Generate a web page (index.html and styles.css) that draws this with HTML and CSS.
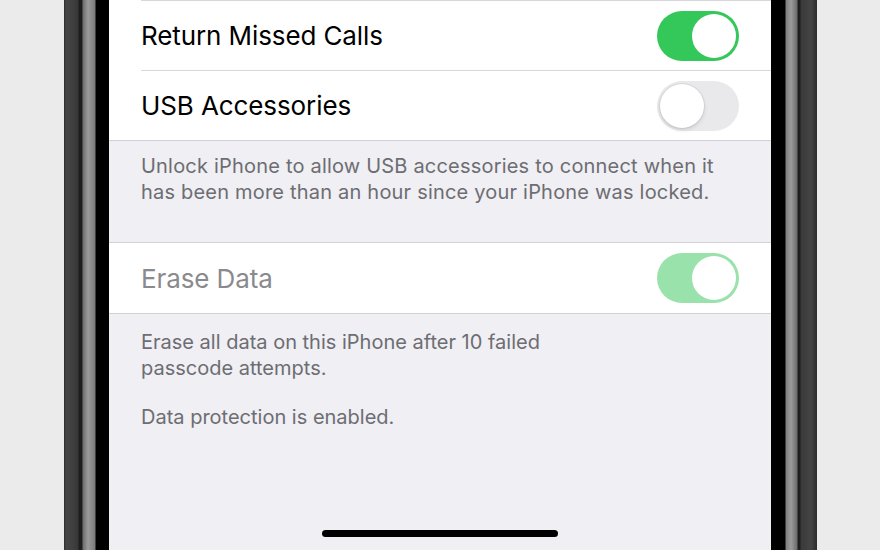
FILE: index.html
```html
<!DOCTYPE html>
<html>
<head>
<meta charset="utf-8">
<link rel="stylesheet" href="styles.css">
</head>
<body>
<div class="phone">
  <div class="bezel bezel-left"></div>
  <div class="screen">
    <div class="group">
      <div class="row">
        <span class="label">Return Missed Calls</span>
        <span class="toggle on"><span class="knob"></span></span>
      </div>
      <div class="row">
        <span class="label">USB Accessories</span>
        <span class="toggle off"><span class="knob"></span></span>
      </div>
    </div>
    <div class="footer footer-usb">
      <p>Unlock iPhone to allow USB accessories to connect when it<br>has been more than an hour since your iPhone was locked.</p>
    </div>
    <div class="group">
      <div class="row">
        <span class="label disabled">Erase Data</span>
        <span class="toggle on dim"><span class="knob"></span></span>
      </div>
    </div>
    <div class="footer footer-erase">
      <p>Erase all data on this iPhone after 10 failed<br>passcode attempts.</p>
      <p>Data protection is enabled.</p>
    </div>
    <div class="home-indicator"></div>
  </div>
  <div class="bezel bezel-right"></div>
</div>
</body>
</html>
```

FILE: styles.css
```css
* { box-sizing: border-box; }
html, body { margin: 0; padding: 0; }
body {
  background: #ebebeb;
  width: 880px;
  height: 550px;
  overflow: hidden;
  font-family: Inter, "Noto Sans", sans-serif;
}
.phone {
  display: flex;
  height: 550px;
  margin-left: 64px;
  width: 753px;
}
.bezel { height: 100%; }
.bezel-left {
  width: 45px;
  background: linear-gradient(to right,
    #2c2c2c 0px, #454545 2px, #3e3e3e 10px, #363636 14px,
    #1e1e1e 15px, #1e1e1e 18px,
    #6e6e6e 19px, #9a9a9a 24px, #7a7a7a 31px,
    #000 32px, #000 45px);
}
.bezel-right {
  width: 46px;
  background: linear-gradient(to right,
    #000 0px, #000 14px,
    #7e7e7e 15px, #9c9c9c 20px, #6c6c6c 26px,
    #1e1e1e 27px, #1e1e1e 29px,
    #3a3a3a 30px, #444 40px, #2c2c2c 46px);
}
.screen {
  width: 662px;
  background: #efeff4;
  display: flex;
  flex-direction: column;
  position: relative;
}
.group {
  background: #fff;
  border-bottom: 1px solid #d1d1d6;
}
.row {
  height: 70px;
  margin-left: 32px;
  padding-right: 32px;
  display: flex;
  align-items: center;
  justify-content: space-between;
  border-top: 1px solid #d8d8dc;
}
.group + .footer + .group { border-top: 1px solid #d1d1d6; }
.group + .footer + .group .row { border-top: none; }
.label {
  font-size: 26px;
  color: #000;
  letter-spacing: -0.1px;
}
.label.disabled { color: #8a8a8e; }
.toggle {
  width: 82px;
  height: 50px;
  border-radius: 25px;
  display: flex;
  align-items: center;
  padding: 0 3px;
}
.toggle.on { background: #34c759; justify-content: flex-end; }
.toggle.on.dim { background: #9ae2ac; }
.toggle.off { background: #e9e9eb; justify-content: flex-start; }
.knob {
  width: 44px;
  height: 44px;
  border-radius: 50%;
  background: #fff;
}
.toggle.off .knob {
  box-shadow: 0 0 0 1px rgba(0,0,0,0.06), 0 2px 4px rgba(0,0,0,0.12);
}
.footer {
  padding-left: 32px;
  color: #6d6d72;
  font-size: 20px;
  line-height: 26px;
  letter-spacing: 0.2px;
}
.footer p { margin: 0; }
.footer-usb { padding-top: 12px; height: 101px; }
.footer-erase { padding-top: 15px; letter-spacing: 0; }
.footer-erase p + p { margin-top: 23px; }
.home-indicator {
  position: absolute;
  left: 213px;
  bottom: 13px;
  width: 236px;
  height: 7px;
  border-radius: 4px;
  background: #000;
}
```
